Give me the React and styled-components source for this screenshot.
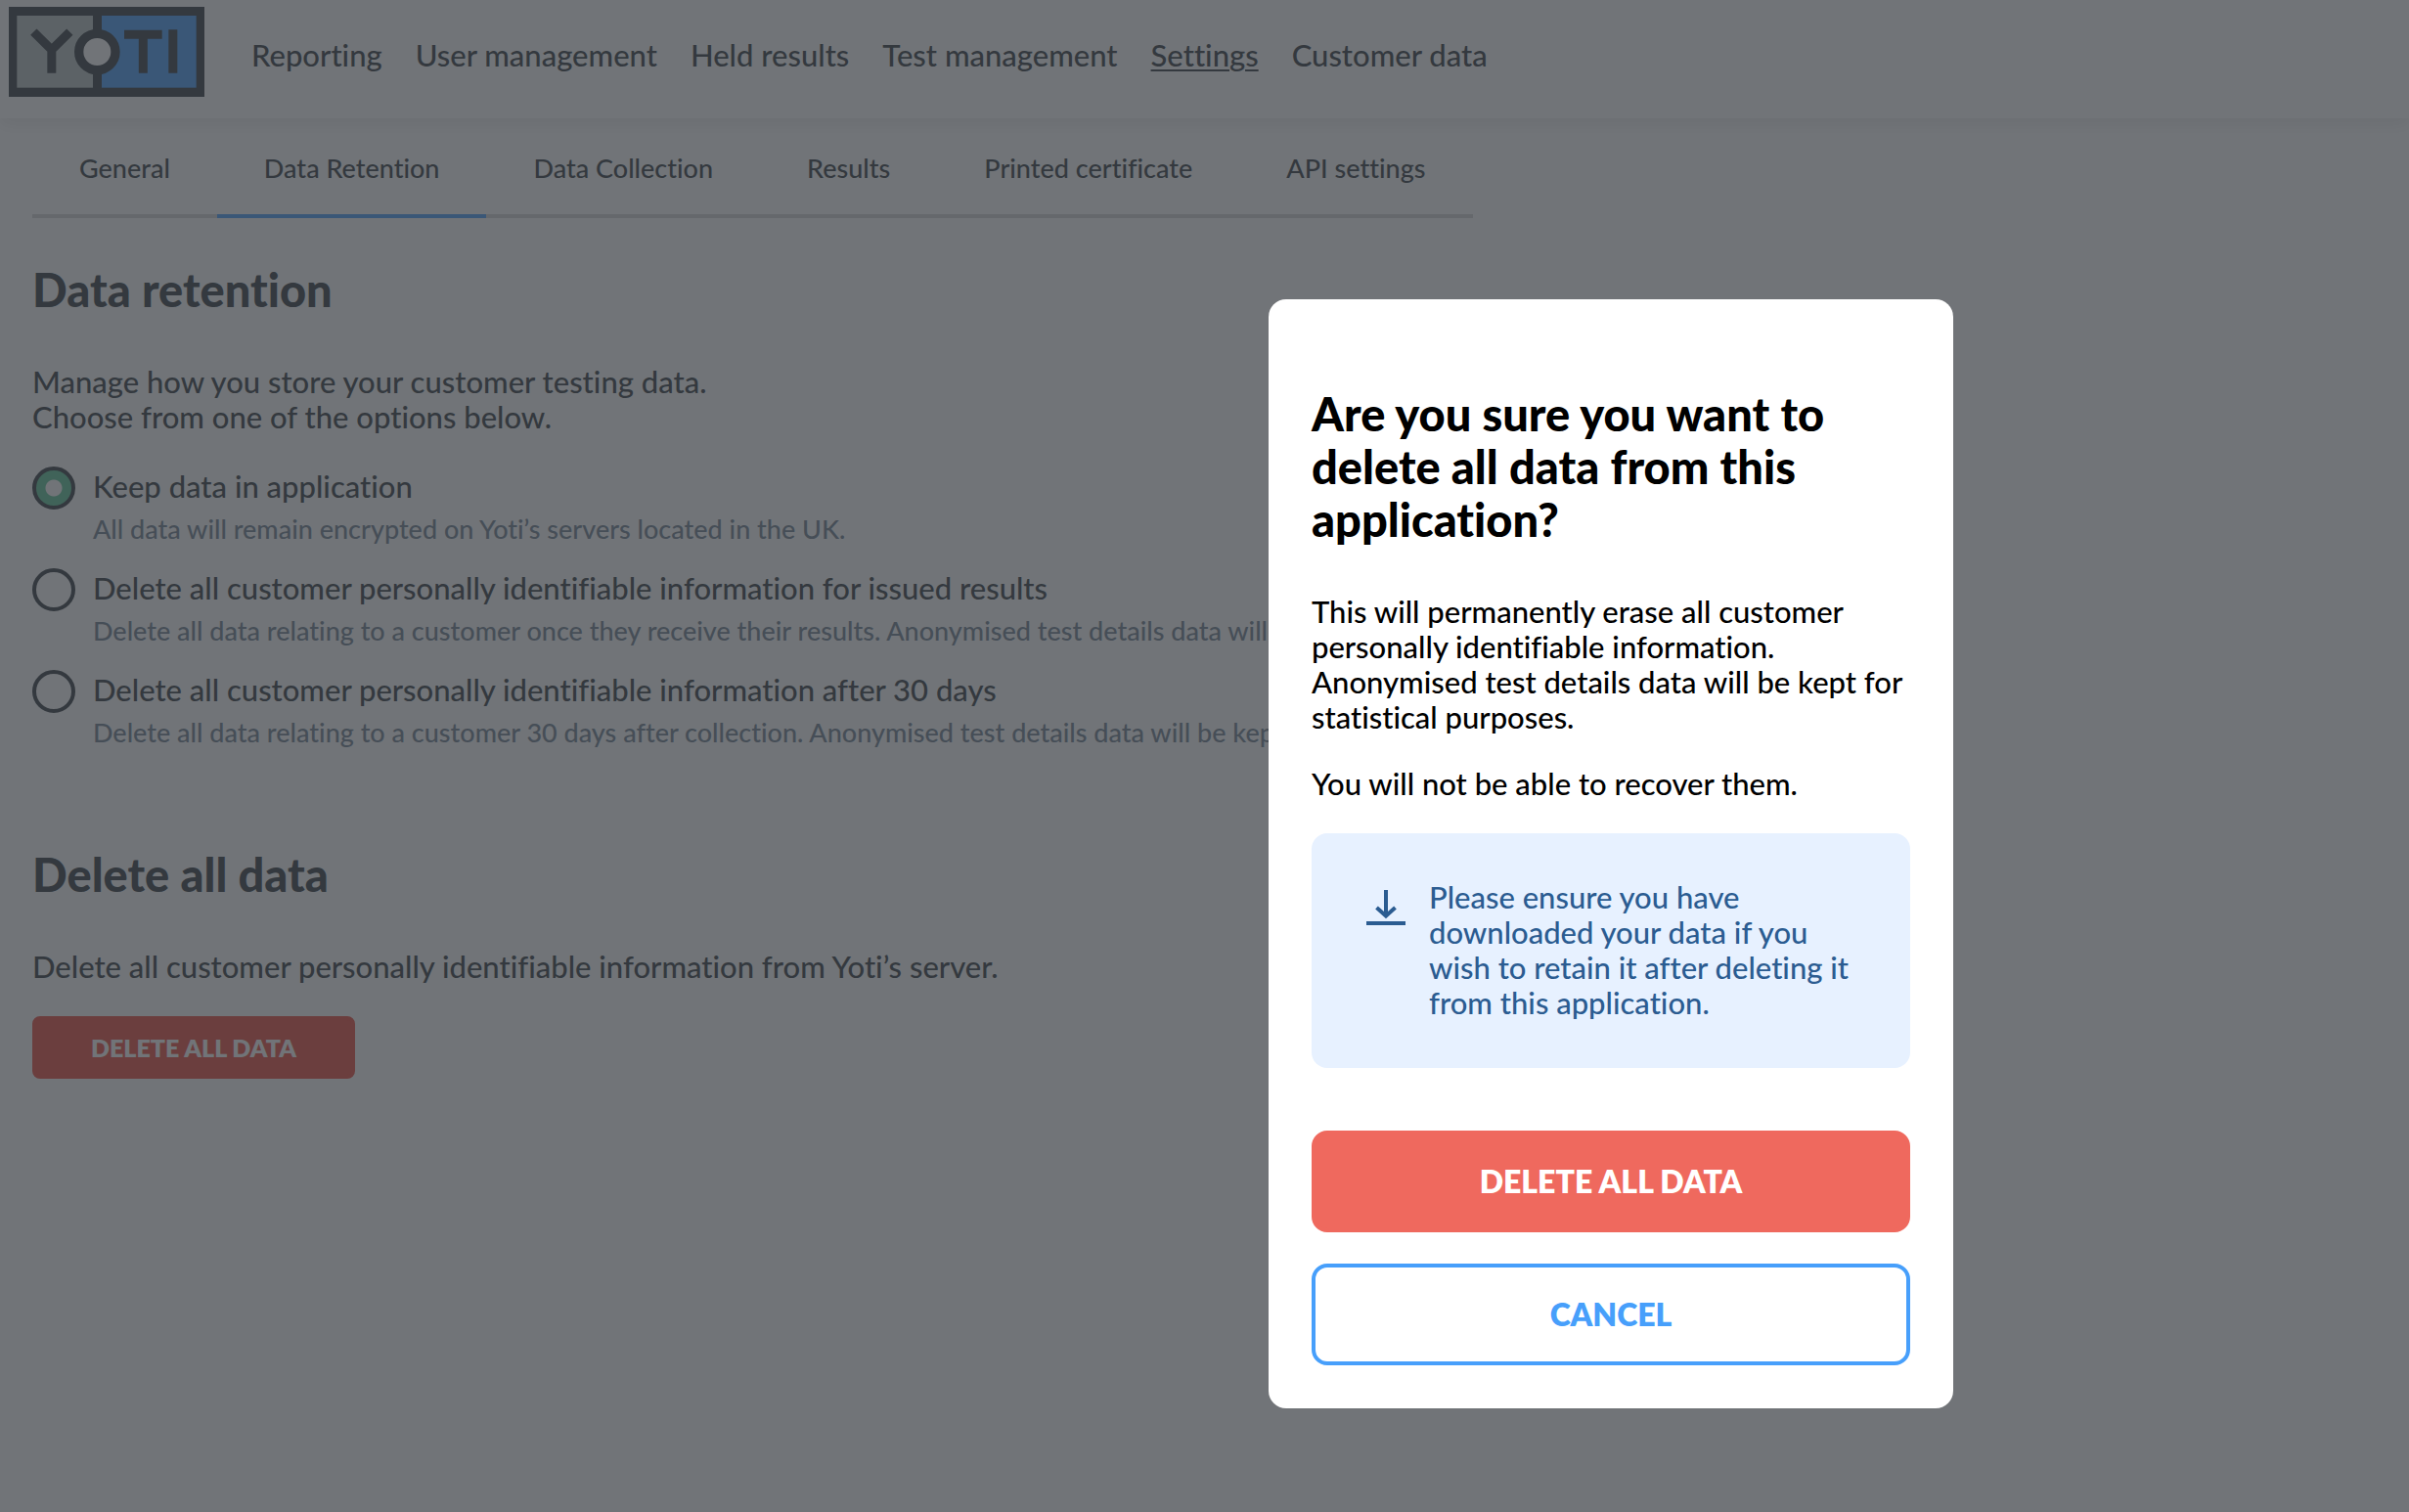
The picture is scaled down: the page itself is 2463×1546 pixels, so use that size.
import React, { useState } from 'react';
import styled, { createGlobalStyle, css } from 'styled-components';

const color = {
  ink: '#333b40',
  muted: '#6f8190',
  line: '#d5d7d8',
  blue: '#479ffb',
  navy: '#2b5c91',
  sky: '#e7f1ff',
  coral: '#ef695e',
  red: '#ea4a3c',
  green: '#5cc596',
  stone: '#bac4c3',
};

const GlobalStyle = createGlobalStyle`
  *, *::before, *::after { box-sizing: border-box; }
  html { background: #fff; }
  body {
    margin: 0;
    color: ${color.ink};
    font: 500 31px/36px Lato, "Open Sans", sans-serif;
    font-variant-ligatures: none;
  }
  h1, h2, p, fieldset { margin: 0; }
`;

const Page = styled.div`
  min-height: 100vh;
`;

const Header = styled.header`
  display: flex;
  align-items: flex-start;
  gap: 48px;
  height: 121px;
  padding: 7px 9px;
  box-shadow: 0 4px 18px rgba(0, 0, 0, 0.1);
`;

const LogoLink = styled.a`
  display: block;
  flex: none;
  width: 200px;
  height: 92px;

  svg { display: block; }
`;

const Nav = styled.nav`
  display: flex;
  flex-wrap: wrap;
  gap: 34px;
  padding-top: 31px;
`;

const NavLink = styled.a`
  color: inherit;
  text-decoration: ${(p) => (p.$active ? 'underline' : 'none')};
  text-decoration-thickness: 2px;
  text-underline-offset: 3px;
`;

const Main = styled.main`
  padding: 0 33px;
`;

const Tabs = styled.nav`
  display: flex;
  width: fit-content;
  margin-bottom: 46px;
`;

const Tab = styled.a`
  padding: 33px 48px 29px;
  border-bottom: 4px solid ${(p) => (p.$active ? color.blue : color.line)};
  color: inherit;
  font-size: 27px;
  text-decoration: none;
`;

const heading = css`
  font-size: 47px;
  font-weight: 900;
  line-height: 54px;
`;

const Section = styled.section`
  display: flex;
  flex-direction: column;
  align-items: flex-start;
  gap: 33px;
  margin-bottom: 98px;
`;

const SectionTitle = styled.h2`
  ${heading}
  margin-bottom: 16px;
`;

const Options = styled.fieldset`
  display: grid;
  gap: 20px;
  min-width: 0;
  padding: 0;
  border: 0;
`;

const Option = styled.div`
  display: grid;
  grid-template-columns: 44px auto;
  column-gap: 18px;
`;

const Radio = styled.input.attrs({ type: 'radio' })`
  appearance: none;
  width: 44px;
  height: 44px;
  margin: 0;
  border: 4px solid ${color.ink};
  border-radius: 50%;

  &:checked {
    background: radial-gradient(circle, #fff 8px, ${color.green} 9px);
  }
`;

const OptionLabel = styled.label`
  line-height: 40px;
  white-space: nowrap;
`;

const OptionHint = styled.p`
  grid-column: 2;
  color: ${color.muted};
  font-size: 27px;
  line-height: 40px;
  white-space: nowrap;
`;

const Button = styled.button`
  border: 4px solid ${(p) => (p.$outline ? color.blue : color.coral)};
  border-radius: 16px;
  height: 104px;
  padding: 0;
  background: ${(p) => (p.$outline ? '#fff' : color.coral)};
  color: ${(p) => (p.$outline ? color.blue : '#fff')};
  font: 800 32px/36px Lato, "Open Sans", sans-serif;
  text-transform: uppercase;
`;

const SmallButton = styled(Button)`
  height: 64px;
  padding: 0 56px;
  border-color: ${color.red};
  border-radius: 8px;
  background: ${color.red};
  font-size: 25px;
`;

const Overlay = styled.div`
  position: fixed;
  inset: 0;
  display: flex;
  align-items: center;
  justify-content: center;
  padding: 200px 0 0 831px;
  background: rgba(52, 57, 63, 0.7);
  overflow: hidden;
`;

const Dialog = styled.div`
  display: flex;
  flex-direction: column;
  width: 700px;
  padding: 90px 44px 44px;
  border-radius: 18px;
  background: #fff;
  color: #000;
`;

const DialogTitle = styled.h1`
  ${heading}
  margin-bottom: 49px;
`;

const DialogText = styled.p`
  margin-bottom: ${(p) => (p.$last ? '33px' : '32px')};
`;

const Notice = styled.div`
  display: flex;
  align-items: flex-start;
  gap: 24px;
  margin-bottom: 64px;
  padding: 47px 56px 49px;
  border-radius: 16px;
  background: ${color.sky};
  color: ${color.navy};

  svg {
    flex: none;
    margin-top: 11px;
  }
`;

const Actions = styled.div`
  display: grid;
  gap: 32px;
`;

function Logo() {
  return (
    <svg width="200" height="92" viewBox="27 21 600 276" role="img" aria-label="Yoti">
      <rect x="27" y="21" width="600" height="276" fill={color.ink} />
      <rect x="52" y="48" width="233" height="221" fill={color.stone} />
      <rect x="312" y="48" width="290" height="221" fill={color.blue} />
      <circle cx="298" cy="159" r="56" fill="#fff" stroke={color.ink} strokeWidth="28" />
      <g fill="none" stroke={color.ink} strokeWidth="27">
        <path d="M103 98L158.500 153L214 98M158.500 150V224" />
        <path d="M381 105.500H497M439 105.500V224M530.500 91V224" />
      </g>
    </svg>
  );
}

function DownloadIcon() {
  return (
    <svg width="40" height="36" viewBox="0 0 40 36" fill="none" stroke="currentColor" strokeWidth="4" aria-hidden="true">
      <path d="M20 0V26M10.500 18L20 26.500L29.500 18" />
      <path d="M0 34H40" />
    </svg>
  );
}

const navItems = ['Reporting', 'User management', 'Held results', 'Test management', 'Settings', 'Customer data'];
const tabs = ['General', 'Data Retention', 'Data Collection', 'Results', 'Printed certificate', 'API settings'];
const options = [
  {
    id: 'keep',
    label: 'Keep data in application',
    hint: 'All data will remain encrypted on Yoti’s servers located in the UK.',
  },
  {
    id: 'issued',
    label: 'Delete all customer personally identifiable information for issued results',
    hint: 'Delete all data relating to a customer once they receive their results. Anonymised test details data will be kept.',
  },
  {
    id: 'after30',
    label: 'Delete all customer personally identifiable information after 30 days',
    hint: 'Delete all data relating to a customer 30 days after collection. Anonymised test details data will be kept.',
  },
];

export default function App() {
  const [retention, setRetention] = useState('keep');

  return (
    <>
      <GlobalStyle />
      <Page>
        <Header>
          <LogoLink href="#home"><Logo /></LogoLink>
          <Nav aria-label="Main">
            {navItems.map((item) => (
              <NavLink key={item} href="#nav" $active={item === 'Settings'}>{item}</NavLink>
            ))}
          </Nav>
        </Header>
        <Main>
          <Tabs aria-label="Settings">
            {tabs.map((tab) => (
              <Tab key={tab} href="#tab" $active={tab === 'Data Retention'}>{tab}</Tab>
            ))}
          </Tabs>
          <Section>
            <SectionTitle>Data retention</SectionTitle>
            <p>
              Manage how you store your customer testing data.
              <br />
              Choose from one of the options below.
            </p>
            <Options aria-label="Data retention">
              {options.map(({ id, label, hint }) => (
                <Option key={id}>
                  <Radio
                    id={id}
                    name="retention"
                    checked={retention === id}
                    onChange={() => setRetention(id)}
                    aria-describedby={`${id}-hint`}
                  />
                  <OptionLabel htmlFor={id}>{label}</OptionLabel>
                  <OptionHint id={`${id}-hint`}>{hint}</OptionHint>
                </Option>
              ))}
            </Options>
          </Section>
          <Section>
            <SectionTitle>Delete all data</SectionTitle>
            <p>Delete all customer personally identifiable information from Yoti’s server.</p>
            <SmallButton type="button">Delete all data</SmallButton>
          </Section>
        </Main>
      </Page>
      <Overlay>
        <Dialog role="dialog" aria-modal="true" aria-labelledby="dialog-title">
          <DialogTitle id="dialog-title">Are you sure you want to delete all data from this application?</DialogTitle>
          <DialogText>
            This will permanently erase all customer personally identifiable information.
            <br />
            Anonymised test details data will be kept for statistical purposes.
          </DialogText>
          <DialogText $last>You will not be able to recover them.</DialogText>
          <Notice>
            <DownloadIcon />
            <p>Please ensure you have downloaded your data if you wish to retain it after deleting it from this application.</p>
          </Notice>
          <Actions>
            <Button type="button">Delete all data</Button>
            <Button type="button" $outline>Cancel</Button>
          </Actions>
        </Dialog>
      </Overlay>
    </>
  );
}
